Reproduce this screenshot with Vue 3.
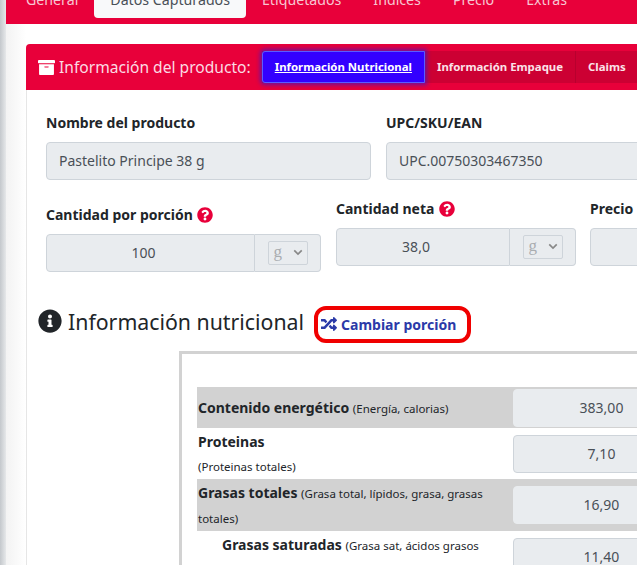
<template>
  <div class="page">
    <div class="sidebar-edge"></div>
    <div class="content">
      <nav class="top-tabs">
        <a v-for="tab in tabs" :key="tab" class="top-tab" :class="{ active: tab === 'Datos Capturados' }">{{ tab }}</a>
      </nav>

      <section class="card">
        <header class="card-head">
          <svg class="box-icon" viewBox="0 0 512 512"><path fill="#fff" d="M32 448c0 17.700 14.300 32 32 32h384c17.700 0 32-14.300 32-32V160H32v288zm160-212c0-6.600 5.400-12 12-12h104c6.600 0 12 5.400 12 12v8c0 6.600-5.400 12-12 12H204c-6.600 0-12-5.400-12-12v-8zM480 32H32C14.300 32 0 46.300 0 64v48c0 8.800 7.200 16 16 16h480c8.800 0 16-7.200 16-16V64c0-17.700-14.300-32-32-32z"/></svg>
          <span class="head-title">Información del producto:</span>
          <div class="pills">
            <a class="pill current">Información Nutricional</a>
            <a class="pill">Información Empaque</a>
            <a class="pill">Claims</a>
          </div>
        </header>

        <div class="card-body">
          <div class="row-name">
            <div class="field">
              <label>Nombre del producto</label>
              <div class="input">Pastelito Principe 38 g</div>
            </div>
            <div class="field">
              <label>UPC/SKU/EAN</label>
              <div class="input">UPC.00750303467350</div>
            </div>
          </div>

          <div class="row-qty">
            <div class="field qty-a">
              <label>Cantidad por porción <svg class="help" viewBox="0 0 512 512"><path fill="#e8003a" d="M504 256c0 137-111 248-248 248S8 393 8 256 119 8 256 8s248 111 248 248zM262.700 90c-54.500 0-89.300 23-116.500 63.800-3.500 5.300-2.400 12.400 2.700 16.300l34.700 26.300c5.200 3.900 12.600 3 16.700-2.100 17.900-22.700 30.100-35.800 57.300-35.800 20.400 0 45.700 13.100 45.700 33 0 15-12.400 22.700-32.600 34-23.600 13.200-54.800 29.700-54.800 70.900V300c0 6.600 5.400 12 12 12h56c6.600 0 12-5.400 12-12v-1.300c0-28.600 83.500-29.700 83.500-107C380 133.300 319.700 90 262.700 90zM256 338c-25.400 0-46 20.600-46 46 0 25.400 20.600 46 46 46s46-20.600 46-46c0-25.400-20.600-46-46-46z"/></svg></label>
              <div class="input-group">
                <div class="input center">100</div>
                <div class="unit"><span class="fake-select">g<svg viewBox="0 0 12 8"><path d="M1.500 1.500 6 6l4.500-4.500" fill="none" stroke="#888" stroke-width="2"/></svg></span></div>
              </div>
            </div>
            <div class="field qty-b">
              <label>Cantidad neta <svg class="help" viewBox="0 0 512 512"><path fill="#e8003a" d="M504 256c0 137-111 248-248 248S8 393 8 256 119 8 256 8s248 111 248 248zM262.700 90c-54.500 0-89.300 23-116.500 63.800-3.500 5.300-2.400 12.400 2.700 16.300l34.700 26.300c5.200 3.900 12.600 3 16.700-2.100 17.900-22.700 30.100-35.800 57.300-35.800 20.400 0 45.700 13.100 45.700 33 0 15-12.400 22.700-32.600 34-23.600 13.200-54.800 29.700-54.800 70.900V300c0 6.600 5.400 12 12 12h56c6.600 0 12-5.400 12-12v-1.300c0-28.600 83.500-29.700 83.500-107C380 133.300 319.700 90 262.700 90zM256 338c-25.400 0-46 20.600-46 46 0 25.400 20.600 46 46 46s46-20.600 46-46c0-25.400-20.600-46-46-46z"/></svg></label>
              <div class="input-group">
                <div class="input center">38,0</div>
                <div class="unit"><span class="fake-select">g<svg viewBox="0 0 12 8"><path d="M1.500 1.500 6 6l4.500-4.500" fill="none" stroke="#888" stroke-width="2"/></svg></span></div>
              </div>
            </div>
            <div class="field qty-c">
              <label>Precio</label>
              <div class="input"></div>
            </div>
          </div>

          <div class="nutri-head">
            <svg class="info-icon" viewBox="0 0 512 512"><path fill="#212529" d="M256 8C119 8 8 119 8 256c0 137 111 248 248 248s248-111 248-248C504 119 393 8 256 8zm0 110c23.200 0 42 18.800 42 42s-18.800 42-42 42-42-18.800-42-42 18.800-42 42-42zm56 254c0 6.600-5.400 12-12 12h-88c-6.600 0-12-5.400-12-12v-24c0-6.600 5.400-12 12-12h12v-64h-12c-6.600 0-12-5.400-12-12v-24c0-6.600 5.400-12 12-12h64c6.600 0 12 5.400 12 12v100h12c6.600 0 12 5.400 12 12v24z"/></svg>
            <h2>Información nutricional</h2>
            <a class="change-btn">
              <svg viewBox="0 0 512 512"><path fill="#2b3aa8" d="M504.971 359.029c9.373 9.373 9.373 24.569 0 33.941l-80 79.984c-15.010 15.010-40.971 4.490-40.971-16.971V416h-58.785a12.004 12.004 0 0 1-8.773-3.812l-70.556-75.596 53.333-57.143L352 336h32v-39.981c0-21.438 25.943-31.998 40.971-16.971l80 79.981zM12 176h84l52.781 56.551 53.333-57.143-70.556-75.596A11.999 11.999 0 0 0 122.785 96H12c-6.627 0-12 5.373-12 12v56c0 6.627 5.373 12 12 12zm372 0v39.984c0 21.460 25.961 31.980 40.971 16.971l80-79.984c9.373-9.373 9.373-24.569 0-33.941l-80-79.981C409.943 24.021 384 34.582 384 56.019V96h-58.785a12.004 12.004 0 0 0-8.773 3.812L96 336H12c-6.627 0-12 5.373-12 12v56c0 6.627 5.373 12 12 12h110.785c3.326 0 6.503-1.381 8.773-3.812L352 176h32z"/></svg>
              Cambiar porción
            </a>
          </div>

          <div class="nutri-box">
            <div class="nutri-row" v-for="row in rows" :key="row.name" :class="{ shaded: row.shaded, indent: row.indent, tall: row.tall }">
              <div class="nutri-label"><b>{{ row.name }}</b> <br v-if="row.br"><small>{{ row.note }}</small></div>
              <div class="nutri-value">{{ row.value }}</div>
            </div>
          </div>
        </div>
      </section>
    </div>
  </div>
</template>

<script setup>
const tabs = ['General', 'Datos Capturados', 'Etiquetados', 'Índices', 'Precio', 'Extras']

const rows = [
  { name: 'Contenido energético', note: '(Energía, calorias)', value: '383,00', shaded: true },
  { name: 'Proteinas', note: '(Proteinas totales)', value: '7,10', br: true },
  { name: 'Grasas totales', note: '(Grasa total, lípidos, grasa, grasas totales)', value: '16,90', shaded: true, tall: true },
  { name: 'Grasas saturadas', note: '(Grasa sat, ácidos grasos saturados)', value: '11,40', indent: true }
]
</script>

<style>
html, body {
  overflow: hidden;
  background: #fff;
}
</style>

<style scoped>
.page {
  width: 637px;
  height: 565px;
  display: flex;
  overflow: hidden;
  font-family: "Noto Sans", sans-serif;
  color: #212529;
}

.sidebar-edge {
  flex: 0 0 6px;
  background: linear-gradient(90deg, #c4c8cc, #e6e8ea);
}

.content {
  flex: 0 0 auto;
  width: 700px;
  background: linear-gradient(90deg, #f3f3f3, #fff 20px);
}

.top-tabs {
  height: 24px;
  background: #e8003a;
  display: flex;
  align-items: flex-start;
  padding-left: 4px;
  overflow: hidden;
}

.top-tab {
  height: 18px;
  line-height: 0;
  padding: 0 16px;
  color: #f7c6d2;
  font-size: 14.200px;
  white-space: nowrap;
}

.top-tab.active {
  background: #f8f9fa;
  color: #495057;
  border-radius: 0 0 4px 4px;
}

.card {
  margin: 20px 0 0 20px;
  background: #fff;
}

.card-head {
  height: 46px;
  background: #e8003a;
  border-radius: 4px 4px 0 0;
  display: flex;
  align-items: center;
  padding-left: 12px;
  color: #fbdbe3;
}

.box-icon {
  width: 17px;
  height: 17px;
  margin-right: 4px;
}

.head-title {
  font-size: 15.600px;
  white-space: nowrap;
}

.pills {
  display: flex;
  margin-left: 11px;
  height: 32px;
  background: #cc0033;
}

.pill {
  padding: 0 12px;
  line-height: 32px;
  font-size: 11.400px;
  font-weight: 700;
  color: #fbe3e9;
  white-space: nowrap;
  border-right: 1px solid #b8002e;
}

.pill.current {
  background: #3300ff;
  color: #fff;
  text-decoration: underline;
  border: 1px solid #5a5cff;
  border-radius: 3px 0 0 3px;
  line-height: 30px;
  box-shadow: 0 0 4px 2px rgba(70, 20, 190, .75);
  position: relative;
}

.card-body {
  border-left: 1px solid #e6e6e6;
  padding: 24px 20px 0 19px;
}

.field label {
  display: block;
  font-size: 14px;
  font-weight: 700;
  line-height: 18px;
  margin-bottom: 10px;
  white-space: nowrap;
}

.row-name {
  display: flex;
  gap: 15px;
}

.row-name .field:first-child {
  flex: 0 0 325px;
}

.row-name .field:last-child {
  flex: 0 0 325px;
}

.input {
  height: 38px;
  box-sizing: border-box;
  background: #e9ecef;
  border: 1px solid #ced4da;
  border-radius: 4px;
  padding: 0 12px;
  line-height: 36px;
  font-size: 14px;
  color: #495057;
  white-space: nowrap;
}

.input.center {
  flex: 1;
  text-align: center;
  padding: 0 14px 0 0;
  border-radius: 4px 0 0 4px;
}

.row-qty {
  display: flex;
  margin-top: 20px;
  align-items: flex-start;
}

.qty-a {
  flex: 0 0 275px;
  padding-top: 6px;
}

.qty-b {
  flex: 0 0 240px;
  margin-left: 15px;
}

.qty-c {
  flex: 0 0 100px;
  margin-left: 14px;
}

.help {
  width: 16px;
  height: 16px;
  margin-left: 1px;
  vertical-align: -3px;
}

.input-group {
  display: flex;
}

.unit {
  flex: 0 0 66px;
  box-sizing: border-box;
  height: 38px;
  background: #e9ecef;
  border: 1px solid #ced4da;
  border-left: 0;
  border-radius: 0 4px 4px 0;
  display: flex;
  align-items: center;
  justify-content: center;
}

.fake-select {
  width: 40px;
  height: 24px;
  box-sizing: border-box;
  border: 1px solid #ced4da;
  border-radius: 2px;
  font-family: "Liberation Serif", serif;
  font-size: 17px;
  line-height: 18px;
  color: #a9adb1;
  display: flex;
  justify-content: space-between;
  align-items: center;
  padding: 0 4px 2px 5px;
}

.fake-select svg {
  width: 10px;
  height: 7px;
}

.nutri-head {
  display: flex;
  align-items: center;
  margin: 31px 0 0 -8px;
  height: 36px;
}

.info-icon {
  width: 24px;
  height: 24px;
  margin-right: 6px;
}

.nutri-head h2 {
  margin: 0;
  font-size: 21.300px;
  font-weight: 400;
  white-space: nowrap;
}

.change-btn {
  margin: 6px 0 0 10px;
  box-sizing: border-box;
  height: 37px;
  width: 157px;
  border: 4px solid #f00000;
  border-radius: 12px;
  display: flex;
  align-items: center;
  gap: 4px;
  padding-left: 3px;
  font-size: 14px;
  font-weight: 700;
  color: #2b3aa8;
  white-space: nowrap;
}

.change-btn svg {
  width: 16px;
  height: 16px;
}

.nutri-box {
  margin: 12px 0 0 133px;
  border: 3px solid #d2d2d2;
  border-right: 0;
  padding: 33px 0 0 15px;
  width: 560px;
}

.nutri-row {
  display: flex;
  align-items: center;
  min-height: 41px;
}

.nutri-row.shaded {
  background: #d2d2d2;
}

.nutri-row.tall {
  min-height: 52px;
}

.nutri-label {
  box-sizing: border-box;
  width: 316px;
  padding: 2px 0 0 1px;
  font-size: 14px;
  line-height: 24px;
}

.nutri-label small {
  font-size: 11.500px;
}

.nutri-row.indent .nutri-label {
  padding-left: 25px;
}

.nutri-value {
  width: 177px;
  box-sizing: border-box;
  height: 38px;
  background: #e9ecef;
  border: 1px solid #ced4da;
  border-radius: 4px;
  text-align: center;
  line-height: 36px;
  font-size: 14px;
  color: #495057;
}

.shaded .nutri-value {
  border-color: #e9ecef;
}
</style>
